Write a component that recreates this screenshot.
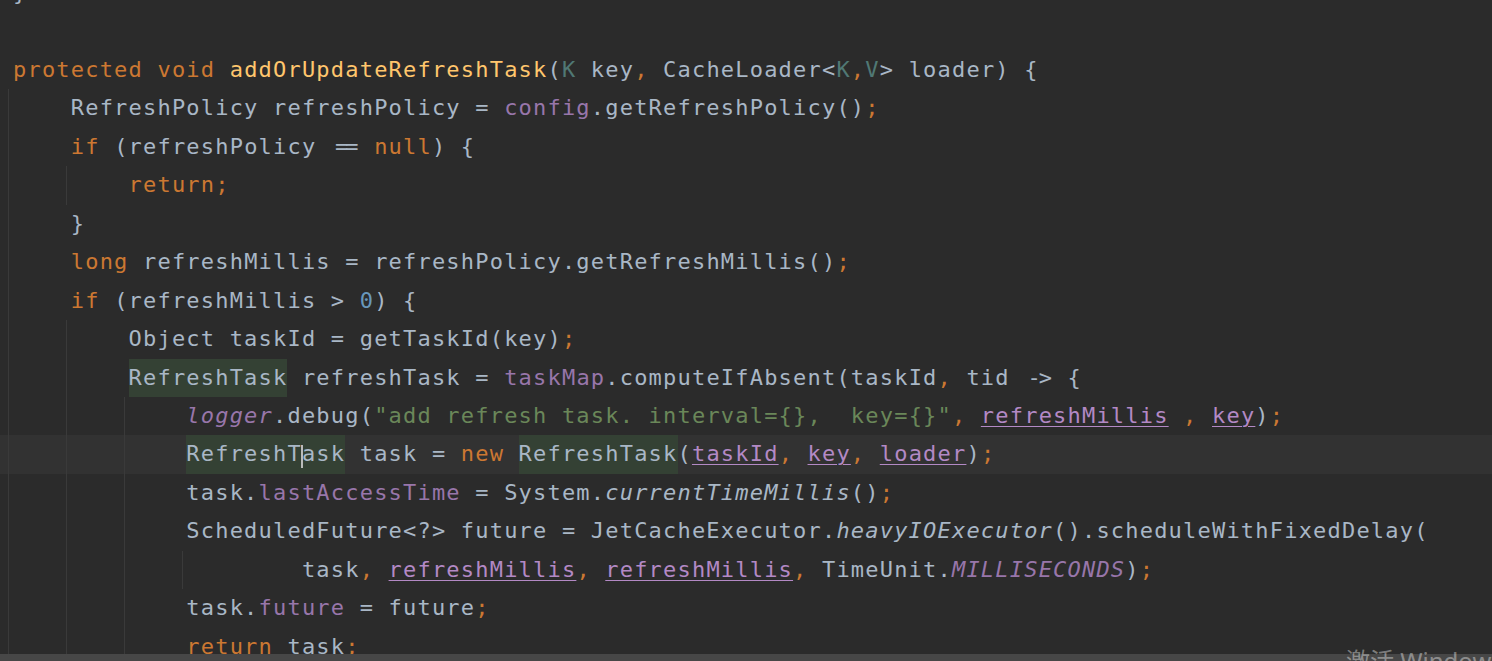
import type { ReactNode } from "react";

// Darcula palette
const kw = "text-[#cc7832]";
const fn = "text-[#ffc66d]";
const fld = "text-[#9876aa]";
const sfld = "text-[#9876aa] italic";
const str = "text-[#6a8759]";
const num = "text-[#6897bb]";
const tp = "text-[#507874]";

const guideLeft: Record<number, string> = {
  0: "left-[8px]",
  4: "left-[66px]",
  8: "left-[124px]",
  12: "left-[182px]",
};

function T({ c, children }: { c: string; children: ReactNode }) {
  return <span className={c}>{children}</span>;
}

// identifier under caret
function Hl({ children }: { children: ReactNode }) {
  return <span className="inline-block bg-[#344134]">{children}</span>;
}

// captured variable
function Cap({ children }: { children: ReactNode }) {
  return (
    <span className="text-[#b389c5] underline decoration-1 underline-offset-[3px]">
      {children}
    </span>
  );
}

// JetBrains Mono style ligatures, two columns wide
function Eq() {
  return (
    <span className="inline-block w-[28.9px] text-center tracking-[-3px]">==</span>
  );
}

function Arrow() {
  return (
    <span className="inline-block w-[28.9px] text-center tracking-[-2px]">-&gt;</span>
  );
}

function Caret() {
  return (
    <span className="relative">
      <span className="absolute left-[-1px] top-[4px] h-[23px] w-[2px] bg-[#bbbbbb]" />
    </span>
  );
}

function Line({
  guides = [],
  current = false,
  children,
}: {
  guides?: number[];
  current?: boolean;
  children?: ReactNode;
}) {
  return (
    <div
      className={`relative h-[38.47px] whitespace-pre pl-[13px] ${current ? "bg-[#323232]" : ""}`}
    >
      {guides.map((g) => (
        <span
          key={g}
          className={`absolute top-0 bottom-0 w-px bg-[#3a3a3a] ${guideLeft[g]}`}
        />
      ))}
      <span className="relative">{children}</span>
    </div>
  );
}

export default function App() {
  return (
    <div className="relative h-screen w-full overflow-hidden bg-[#2b2b2b] font-['DejaVu_Sans_Mono',monospace] text-[22px] leading-[38.47px] tracking-[1.2px] text-[#a9b7c6]">
      <div className="-mt-[26.2px]">
        <Line>{"}"}</Line>
        <Line />
        <Line>
          <T c={kw}>protected void </T>
          <T c={fn}>addOrUpdateRefreshTask</T>(<T c={tp}>K</T> key
          <T c={kw}>, </T>CacheLoader&lt;<T c={tp}>K</T>
          <T c={kw}>,</T>
          <T c={tp}>V</T>&gt; loader) {"{"}
        </Line>
        <Line guides={[0]}>
          {"    RefreshPolicy refreshPolicy = "}
          <T c={fld}>config</T>.getRefreshPolicy()<T c={kw}>;</T>
        </Line>
        <Line guides={[0]}>
          {"    "}
          <T c={kw}>if </T>(refreshPolicy <Eq /> <T c={kw}>null</T>) {"{"}
        </Line>
        <Line guides={[0, 4]}>
          {"        "}
          <T c={kw}>return;</T>
        </Line>
        <Line guides={[0]}>{"    }"}</Line>
        <Line guides={[0]}>
          {"    "}
          <T c={kw}>long </T>refreshMillis = refreshPolicy.getRefreshMillis()
          <T c={kw}>;</T>
        </Line>
        <Line guides={[0]}>
          {"    "}
          <T c={kw}>if </T>(refreshMillis &gt; <T c={num}>0</T>) {"{"}
        </Line>
        <Line guides={[0, 4]}>
          {"        Object taskId = getTaskId(key)"}
          <T c={kw}>;</T>
        </Line>
        <Line guides={[0, 4]}>
          {"        "}
          <Hl>RefreshTask</Hl>
          {" refreshTask = "}
          <T c={fld}>taskMap</T>.computeIfAbsent(taskId<T c={kw}>, </T>tid <Arrow />{" {"}
        </Line>
        <Line guides={[0, 4, 8]}>
          {"            "}
          <T c={sfld}>logger</T>.debug(
          <T c={str}>"add refresh task. interval={"{}"},  key={"{}"}"</T>
          <T c={kw}>, </T>
          <Cap>refreshMillis</Cap>
          <T c={kw}> , </T>
          <Cap>key</Cap>)<T c={kw}>;</T>
        </Line>
        <Line guides={[0, 4, 8]} current>
          {"            "}
          <Hl>
            RefreshT
            <Caret />
            ask
          </Hl>
          {" task = "}
          <T c={kw}>new </T>
          <Hl>RefreshTask</Hl>(<Cap>taskId</Cap>
          <T c={kw}>, </T>
          <Cap>key</Cap>
          <T c={kw}>, </T>
          <Cap>loader</Cap>)<T c={kw}>;</T>
        </Line>
        <Line guides={[0, 4, 8]}>
          {"            task."}
          <T c={fld}>lastAccessTime</T> = System.
          <T c="italic">currentTimeMillis</T>()<T c={kw}>;</T>
        </Line>
        <Line guides={[0, 4, 8]}>
          {"            ScheduledFuture<?> future = JetCacheExecutor."}
          <T c="italic">heavyIOExecutor</T>().scheduleWithFixedDelay(
        </Line>
        <Line guides={[0, 4, 8, 12]}>
          {"                    task"}
          <T c={kw}>, </T>
          <Cap>refreshMillis</Cap>
          <T c={kw}>, </T>
          <Cap>refreshMillis</Cap>
          <T c={kw}>, </T>TimeUnit.<T c={sfld}>MILLISECONDS</T>)<T c={kw}>;</T>
        </Line>
        <Line guides={[0, 4, 8]}>
          {"            task."}
          <T c={fld}>future</T> = future<T c={kw}>;</T>
        </Line>
        <Line guides={[0, 4, 8]}>
          {"            "}
          <T c={kw}>return </T>task<T c={kw}>;</T>
        </Line>
      </div>

      {/* horizontal scrollbar */}
      <div className="absolute bottom-0 left-0 right-0 h-[7px] bg-[#474747]" />

      {/* activation watermark */}
      <div className="absolute left-[1346px] top-[649px] whitespace-nowrap font-['Noto_Sans','Noto_Sans_CJK_SC',sans-serif] text-[24px] leading-[24px] tracking-normal text-white/40">
        激活 Windows
      </div>
    </div>
  );
}
